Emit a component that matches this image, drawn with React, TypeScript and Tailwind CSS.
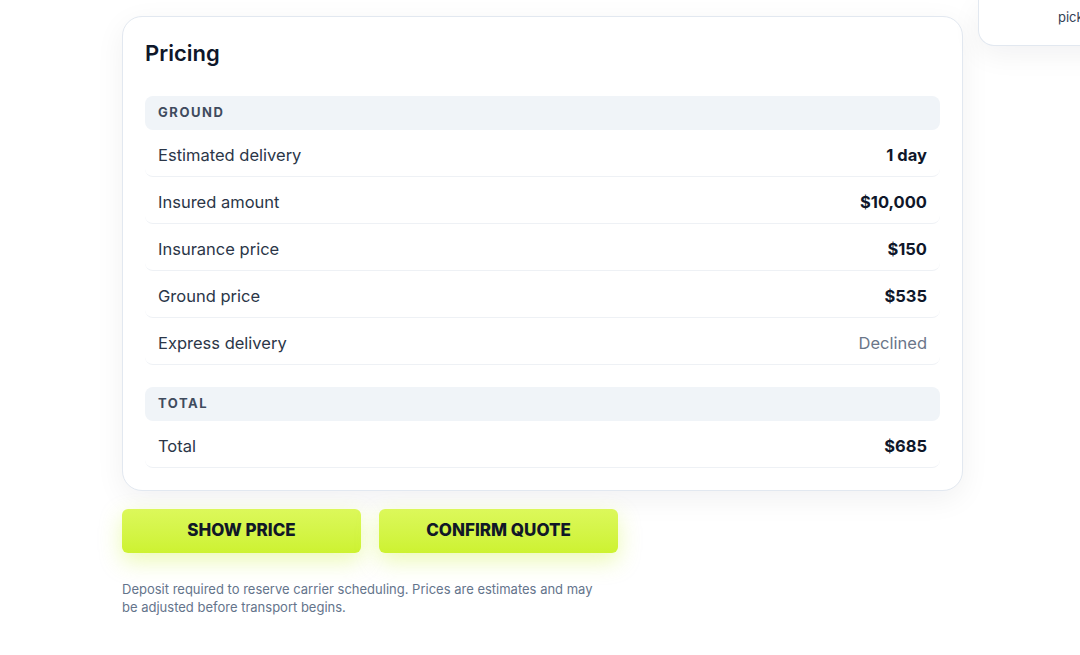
import React from 'react';

type Row = { label: string; value: string; muted?: boolean };

const ground: Row[] = [
  { label: 'Estimated delivery', value: '1 day' },
  { label: 'Insured amount', value: '$10,000' },
  { label: 'Insurance price', value: '$150' },
  { label: 'Ground price', value: '$535' },
  { label: 'Express delivery', value: 'Declined', muted: true },
];

function SectionHeader({ title }: { title: string }) {
  return (
    <div className="h-[34px] flex items-center px-[13px] rounded-lg bg-[#f0f4f8]">
      <span className="text-[13px] font-bold tracking-[0.12em] text-[#3f4b5e]">{title}</span>
    </div>
  );
}

function PriceRow({ row }: { row: Row }) {
  return (
    <div className="h-[47px] flex items-center justify-between px-[13px] pt-[4px] border-b border-[#eef1f5] rounded-lg">
      <span className="text-[16.5px] text-[#2b3648]">{row.label}</span>
      <span
        className={
          row.muted
            ? 'text-[16.5px] text-[#6b7689]'
            : 'text-[16.5px] font-bold text-[#0f172a]'
        }
      >
        {row.value}
      </span>
    </div>
  );
}

export default function App() {
  return (
    <div
      className="w-[1080px] h-[655px] overflow-hidden bg-white flex"
      style={{ fontFamily: 'Inter, "Noto Sans", sans-serif' }}
    >
      <div className="ml-[122px] w-[841px] shrink-0 pt-[16px]">
        <div className="bg-white border border-[#e2e8f0] rounded-[20px] px-[22px] pt-[22px] pb-[22px] shadow-[0_8px_30px_rgba(15,23,42,0.06)]">
          <h2 className="text-[22px] leading-[28px] font-semibold text-[#0f172a] mb-[29px]">Pricing</h2>
          <SectionHeader title="GROUND" />
          {ground.map((r) => (
            <PriceRow key={r.label} row={r} />
          ))}
          <div className="h-[22px]" />
          <SectionHeader title="TOTAL" />
          <PriceRow row={{ label: 'Total', value: '$685' }} />
        </div>

        <div className="flex gap-[18px] mt-[18px]">
          <button className="w-[239px] h-[44px] rounded-md bg-gradient-to-b from-[#dcf85a] to-[#cdf230] text-[17px] font-extrabold text-[#111827] shadow-[0_8px_22px_rgba(200,240,40,0.35)]">
            SHOW PRICE
          </button>
          <button className="w-[239px] h-[44px] rounded-md bg-gradient-to-b from-[#dcf85a] to-[#cdf230] text-[17px] font-extrabold text-[#111827] shadow-[0_8px_22px_rgba(200,240,40,0.35)]">
            CONFIRM QUOTE
          </button>
        </div>

        <p className="mt-[27px] max-w-[480px] text-[13px] leading-[18px] text-[#64748b]">
          Deposit required to reserve carrier scheduling. Prices are estimates and may be adjusted before transport begins.
        </p>
      </div>

      <div className="ml-[15px] w-[300px] shrink-0">
        <div className="h-[46px] bg-white border border-t-0 border-[#e2e8f0] rounded-bl-2xl shadow-[0_8px_30px_rgba(15,23,42,0.06)] pl-[79px] pt-[4px] whitespace-nowrap overflow-hidden">
          <span className="text-[13px] text-[#334155]">pickup date</span>
        </div>
      </div>
    </div>
  );
}
